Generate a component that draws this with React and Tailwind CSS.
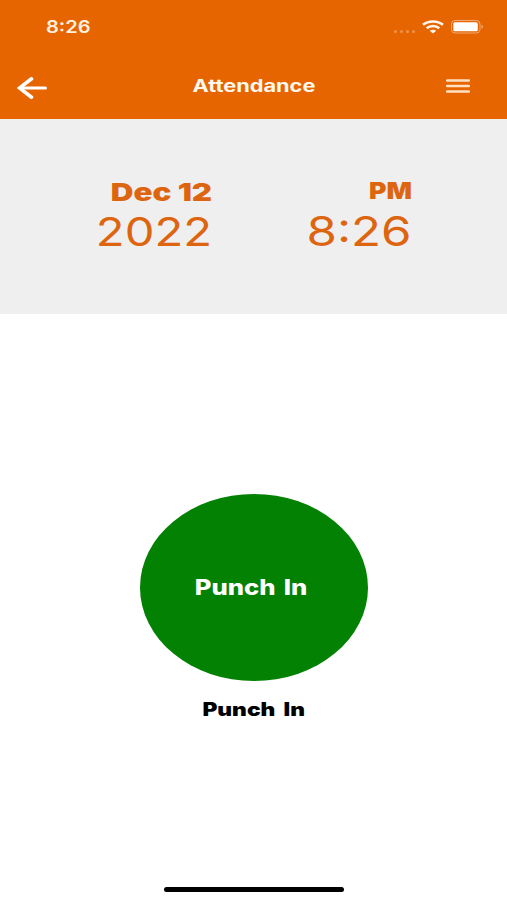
const Stretch = ({ className, children }) => (
    <span className={`block whitespace-nowrap ${className}`}>{children}</span>
);

const StatusBar = () => (
    <div className="flex h-[54px] items-center justify-between pl-[46px] pr-[23px]">
        <Stretch className="origin-left scale-x-[1.18] pt-[2px] text-[17px] font-semibold text-[#fff1df]">8:26</Stretch>
        <div className="flex items-center gap-[7px]">
            <div className="flex gap-[3px] pt-2">
                {[0, 1, 2, 3].map(dot => (
                    <span key={dot} className="h-[3px] w-[3px] rounded-full bg-white/30"></span>
                ))}
            </div>
            <svg width="22" height="14" viewBox="0 0 22 14" fill="none" stroke="#fff6ea" strokeWidth="2.6">
                <path d="M1 4.800C6.500 .4 15.500 .4 21 4.800" />
                <path d="M4.700 8.200c3.500-3 9.100-3 12.600 0" />
                <path d="M11 13.500 7.700 10.800c1.800-1.500 4.800-1.500 6.600 0z" fill="#fff6ea" stroke="none" />
            </svg>
            <svg width="33" height="14" viewBox="0 0 33 14">
                <rect x=".5" y=".5" width="28.500" height="12.500" rx="3.500" fill="none" stroke="white" strokeOpacity=".45" />
                <rect x="2.300" y="2.300" width="24.500" height="9" rx="1.500" fill="white" />
                <path d="M30.500 4.800c2 .8 2 3.200 0 4z" fill="white" fillOpacity=".45" />
            </svg>
        </div>
    </div>
);

const App = () => {
    return (
        <div className="flex h-[900px] w-[507px] flex-col bg-white font-['Inter',sans-serif]">
            <header className="h-[119px] bg-[#e66500] text-white">
                <StatusBar />
                <div className="grid h-[64px] grid-cols-[1fr_auto_1fr] items-center px-[17px]">
                    <svg className="mt-[3px]" width="31" height="24" viewBox="0 0 31 24" fill="none" stroke="white" strokeLinecap="round">
                        <path d="M28.500 12H3" strokeWidth="3" />
                        <path d="M14.500 2.800 2.500 12l12 9.200" strokeWidth="3.600" />
                    </svg>
                    <Stretch className="scale-x-[1.28] pt-px text-[17px] font-bold text-[#fff8ee]">Attendance</Stretch>
                    <svg className="mr-[20px] justify-self-end" width="24" height="14" viewBox="0 0 24 14" stroke="#ffe0c0" strokeWidth="2.300" strokeLinecap="round">
                        <path d="M1 1.500h22M1 7h22M1 12.500h22" />
                    </svg>
                </div>
            </header>

            <section className="flex h-[195px] justify-end gap-[112px] bg-[#efefef] pr-[95px] pt-[57px] text-[#de6510]">
                <div className="flex flex-col items-end">
                    <Stretch className="origin-right scale-x-[1.28] text-[24.5px] leading-[33px] font-black">Dec 12</Stretch>
                    <Stretch className="origin-right scale-x-[1.21] text-[39px] leading-[46px]">2022</Stretch>
                </div>
                <div className="flex flex-col items-end">
                    <Stretch className="origin-right scale-x-[1.16] text-[23px] leading-[31px] font-black">PM</Stretch>
                    <Stretch className="origin-right scale-x-[1.2] text-[41px] leading-[49px]">8:26</Stretch>
                </div>
            </section>

            <main className="flex flex-1 flex-col items-center pt-[180px]">
                <button className="flex h-[187px] w-[228px] items-center justify-center rounded-[50%] bg-[#038103] pr-[4px] pt-px text-white">
                    <Stretch className="scale-x-[1.22] text-[21px] font-extrabold [word-spacing:2px]">Punch In</Stretch>
                </button>
                <Stretch className="mt-[15px] scale-x-[1.23] text-[18.5px] font-black [word-spacing:3px]">Punch In</Stretch>
            </main>

            <div className="mx-auto mb-[8px] h-[5px] w-[180px] rounded-full bg-black"></div>
        </div>
    );
};

export default App;
